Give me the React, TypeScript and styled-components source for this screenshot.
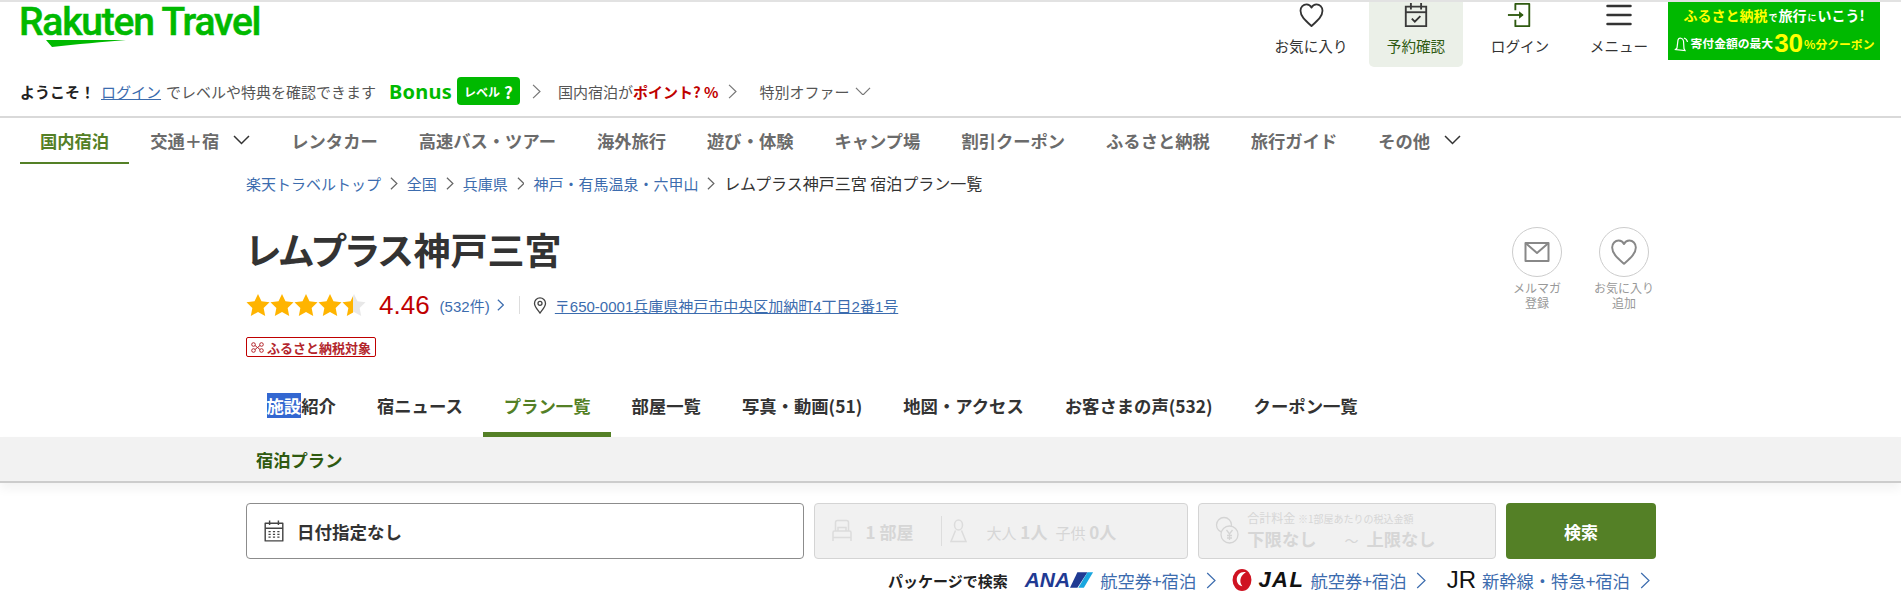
import React from 'react'
import styled, { createGlobalStyle } from 'styled-components'

const GlobalStyle = createGlobalStyle`
    html, body {
        margin: 0;
        padding: 0;
        background: #fff;
        color: #333;
        font-family: "Liberation Sans", "Noto Sans CJK JP", sans-serif;
        overflow: hidden;
    }
    * { box-sizing: border-box; }
    a { color: inherit; }
`

const GREEN = '#00b900'
const OLIVE = '#548026'
const LINK = '#3c6cae'

type ChevronProps = { size?: number; color?: string; stroke?: number }

const ChevronRight: React.FC<ChevronProps> = ({ size = 14, color = '#666', stroke = 1.2 }) => (
    <svg width={size * 0.6} height={size} viewBox="0 0 6 10" fill="none" style={{ flexShrink: 0 }}>
        <path d="M.7.6 5.3 5 .7 9.4" stroke={color} strokeWidth={stroke} vectorEffect="non-scaling-stroke" />
    </svg>
)

const ChevronDown: React.FC<ChevronProps> = ({ size = 17, color = '#333', stroke = 1.5 }) => (
    <svg width={size} height={size * 0.55} viewBox="0 0 18 10" fill="none" style={{ flexShrink: 0 }}>
        <path d="M1 1l8 8 8-8" stroke={color} strokeWidth={stroke} vectorEffect="non-scaling-stroke" />
    </svg>
)

const HeartIcon: React.FC<{ color?: string; size?: number }> = ({ color = '#333', size = 27 }) => (
    <svg width={size} height={size} viewBox="0 0 26 26" fill="none">
        <path
            d="M13 24C7 18.6 2 14.4 2 8.8 2 5 4.8 2.4 8 2.4c2.200 0 4 1.200 5 3.200 1-2 2.800-3.200 5-3.200 3.200 0 6 2.600 6 6.400C24 14.400 19 18.600 13 24z"
            stroke={color}
            strokeWidth="1.8"
            strokeLinejoin="round"
        />
    </svg>
)

const CalendarCheckIcon = () => (
    <svg width="26" height="28" viewBox="0 0 26 28" fill="none" stroke="#3a3a3a" strokeWidth="2">
        <path d="M2 5h22v21H2z" />
        <path d="M2 11h22" />
        <path d="M7.500 1v7M18.500 1v7" />
        <path d="M8.500 18l3.200 3.200 6-6" stroke="#333" />
    </svg>
)

const LoginIcon = () => (
    <svg width="28" height="28" viewBox="0 0 28 28" fill="none" stroke="#2f5a10" strokeWidth="2">
        <path d="M9 9V2h15v24H9v-7" strokeLinejoin="round" />
        <path d="M1 14h16" />
        <path d="M13 10l5 4-5 4z" fill="#2f5a10" stroke="none" />
    </svg>
)

const MenuIcon = () => (
    <svg width="26" height="24" viewBox="0 0 26 24" fill="none" stroke="#333" strokeWidth="2.500" strokeLinecap="round">
        <path d="M1.500 3h23M1.500 12h23M1.500 21h23" />
    </svg>
)

const BellIcon = () => (
    <svg width="15" height="17" viewBox="0 0 15 17" fill="none" stroke="#fff" strokeWidth="1.200">
        <path d="M3 13L1.500 14.500 11 15.500 10 13.500 9.500 6C9 3 5 2 4 5z" />
        <path d="M10 3q3 1 3.500 4" />
    </svg>
)

const STAR = 'M10 .8l2.900 6.100 6.700.9-4.900 4.600 1.300 6.700L10 15.800 4 19.100l1.300-6.700L.4 7.800l6.700-.9z'

const Star: React.FC<{ fill: number; id: string }> = ({ fill, id }) => (
    <svg width="24" height="24" viewBox="0 0 20 20">
        <defs>
            <linearGradient id={id}>
                <stop offset={`${fill}%`} stopColor="#ffb400" />
                <stop offset={`${fill}%`} stopColor="#e8e8e8" />
            </linearGradient>
        </defs>
        <path d={STAR} fill={`url(#${id})`} />
    </svg>
)

const PinIcon = () => (
    <svg width="14" height="17" viewBox="0 0 14 17" fill="none" stroke="#444" strokeWidth="1.300">
        <path d="M7 16C4 12 1.500 9.500 1.500 6.400a5.500 5.500 0 0 1 11 0C12.500 9.500 10 12 7 16z" />
        <circle cx="7" cy="6.300" r="2" />
    </svg>
)

const ScissorsIcon = () => (
    <svg width="13" height="11" viewBox="0 0 13 11" fill="none" stroke="#b3262c" strokeWidth="1">
        <circle cx="2.500" cy="2.500" r="1.800" />
        <circle cx="2.500" cy="8.500" r="1.800" />
        <circle cx="10.500" cy="2.500" r="1.800" />
        <circle cx="10.500" cy="8.500" r="1.800" />
        <path d="M4 3.500l5 4M9 3.500l-5 4" />
    </svg>
)

const MailIcon = () => (
    <svg width="26" height="22" viewBox="0 0 26 22" fill="none" stroke="#888" strokeWidth="2" strokeLinejoin="round">
        <path d="M1.500 2h23v18h-23z" />
        <path d="M1.500 2L13 12 24.500 2" />
    </svg>
)

const DateIcon = () => (
    <svg width="20" height="22" viewBox="0 0 18 20" fill="none" stroke="#444" strokeWidth="1.300">
        <path d="M1 3h16v16H1z" strokeLinejoin="round" />
        <path d="M1 7.500h16M5 .5v4M13 .5v4" />
        <path d="M4 10.500h2M8 10.500h2M12 10.500h2M4 13h2M8 13h2M12 13h2M4 15.500h2M8 15.500h2M12 15.500h2" strokeWidth="1.200" />
    </svg>
)

const BedIcon = () => (
    <svg width="20" height="24" viewBox="0 0 20 24" fill="none" stroke="#dcdcdc" strokeWidth="1.500">
        <path d="M3.500 12V3.500q0-2 2-2h9q2 0 2 2V12" />
        <path d="M6 12V8.500h8V12" />
        <path d="M1 22v-8.500q0-1.500 1.500-1.500h15q1.500 0 1.500 1.500V22M1 18.500h18" />
    </svg>
)

const PersonIcon = () => (
    <svg width="17" height="24" viewBox="0 0 17 24" fill="none" stroke="#dcdcdc" strokeWidth="1.500">
        <ellipse cx="8.500" cy="6" rx="4" ry="5" />
        <path d="M5.500 11.500L1 22.500h15l-4.500-11" />
    </svg>
)

const CoinsIcon = () => (
    <svg width="24" height="30" viewBox="0 0 24 30" fill="none" stroke="#d4d4d4" strokeWidth="1.300">
        <circle cx="9" cy="9" r="7.500" />
        <circle cx="14.500" cy="18.500" r="8.500" fill="#f1f1f1" />
        <path d="M11.500 14l3 4 3-4M14.500 18v6M12 19.500h5M12 22h5" />
    </svg>
)

const CraneLogo = () => (
    <svg width="20" height="24" viewBox="0 0 18 21">
        <ellipse cx="9" cy="10.500" rx="8.500" ry="10" fill="#cf1322" />
        <path d="M12.500 3.500C8 2.500 4 6 4.300 10.500c.2 3 2.200 5.300 5 5.700C7.500 14 7 11 8 8.500c.8-2.200 2.800-4 4.500-5z" fill="#fff" />
    </svg>
)

const NAV_ITEMS: { label: string; active?: boolean; menu?: boolean }[] = [
    { label: '国内宿泊', active: true },
    { label: '交通＋宿', menu: true },
    { label: 'レンタカー' },
    { label: '高速バス・ツアー' },
    { label: '海外旅行' },
    { label: '遊び・体験' },
    { label: 'キャンプ場' },
    { label: '割引クーポン' },
    { label: 'ふるさと納税' },
    { label: '旅行ガイド' },
    { label: 'その他', menu: true },
]

const TAB_ITEMS = ['宿ニュース', 'プラン一覧', '部屋一覧', '写真・動画(51)', '地図・アクセス', 'お客さまの声(532)', 'クーポン一覧']

const CRUMBS = ['楽天トラベルトップ', '全国', '兵庫県', '神戸・有馬温泉・六甲山']

export default function App() {
    return (
        <>
            <GlobalStyle />
            <Page>
                <TopBar>
                    <Logo>
                        <LogoText>Rakuten Travel</LogoText>
                        <Swoosh width="80" height="7" viewBox="0 0 80 7">
                            <path d="M0 0h80C58 2 30 4 6 7z" fill={GREEN} />
                        </Swoosh>
                    </Logo>
                    <TopNav>
                        <TopItem>
                            <HeartIcon />
                            <TopLabel>お気に入り</TopLabel>
                        </TopItem>
                        <TopItem $active $gap={11}>
                            <CalendarCheckIcon />
                            <TopLabel>予約確認</TopLabel>
                        </TopItem>
                        <TopItem $gap={10}>
                            <LoginIcon />
                            <TopLabel>ログイン</TopLabel>
                        </TopItem>
                        <TopItem $gap={5}>
                            <MenuIcon />
                            <TopLabel>メニュー</TopLabel>
                        </TopItem>
                        <Banner>
                            <BannerTop>
                                <b>ふるさと納税</b>
                                <small>で</small>
                                旅行
                                <small>に</small>
                                いこう!
                            </BannerTop>
                            <BannerBottom>
                                <BellIcon />
                                寄付金額の最大<strong>30</strong>
                                <b>%分クーポン</b>
                            </BannerBottom>
                        </Banner>
                    </TopNav>
                </TopBar>

                <InfoBar>
                    <Welcome>ようこそ！</Welcome>
                    <InfoLink href="#">ログイン</InfoLink>
                    <InfoText>でレベルや特典を確認できます</InfoText>
                    <BonusWord>Bonus</BonusWord>
                    <LevelBadge>
                        レベル <span>?</span>
                    </LevelBadge>
                    <ChevronRight size={15} color="#777" />
                    <InfoText $gap={17}>
                        国内宿泊が<Red>ポイント? %</Red>
                    </InfoText>
                    <ChevronRight size={15} color="#777" />
                    <InfoText $gap={22} $end={6}>
                        特別オファー
                    </InfoText>
                    <ChevronDown size={16} color="#777" stroke={1.2} />
                </InfoBar>

                <GlobalNav>
                    {NAV_ITEMS.map((item) => (
                        <NavItem key={item.label} $active={item.active}>
                            {item.label}
                            {item.menu && <ChevronDown />}
                        </NavItem>
                    ))}
                </GlobalNav>

                <Content>
                    <Crumbs>
                        {CRUMBS.map((c) => (
                            <React.Fragment key={c}>
                                <CrumbLink>{c}</CrumbLink>
                                <ChevronRight size={13} color="#666" />
                            </React.Fragment>
                        ))}
                        <CrumbCurrent>レムプラス神戸三宮 宿泊プラン一覧</CrumbCurrent>
                    </Crumbs>

                    <HotelHead>
                        <div>
                            <HotelName>レムプラス神戸三宮</HotelName>
                            <RatingRow>
                                <Stars>
                                    {[100, 100, 100, 100, 46].map((f, i) => (
                                        <Star key={i} fill={f} id={`star-${i}`} />
                                    ))}
                                </Stars>
                                <Score>4.46</Score>
                                <Reviews>(532件)</Reviews>
                                <ChevronRight size={12} color={LINK} />
                                <Sep />
                                <PinIcon />
                                <Address href="#">〒650-0001兵庫県神戸市中央区加納町4丁目2番1号</Address>
                            </RatingRow>
                            <FurusatoBadge>
                                <ScissorsIcon />
                                ふるさと納税対象
                            </FurusatoBadge>
                        </div>
                        <CircleActions>
                            <CircleAction>
                                <Circle>
                                    <MailIcon />
                                </Circle>
                                <CircleLabel>
                                    メルマガ
                                    <br />
                                    登録
                                </CircleLabel>
                            </CircleAction>
                            <CircleAction>
                                <Circle>
                                    <HeartIcon color="#888" size={28} />
                                </Circle>
                                <CircleLabel>
                                    お気に入り
                                    <br />
                                    追加
                                </CircleLabel>
                            </CircleAction>
                        </CircleActions>
                    </HotelHead>

                    <Tabs>
                        <Tab>
                            <Selected>施設</Selected>紹介
                        </Tab>
                        {TAB_ITEMS.map((t) => (
                            <Tab key={t} $active={t === 'プラン一覧'}>
                                {t}
                            </Tab>
                        ))}
                    </Tabs>
                </Content>

                <PlanBand>
                    <PlanTitle>宿泊プラン</PlanTitle>
                </PlanBand>

                <Content>
                    <SearchRow>
                        <DateBox>
                            <DateIcon />
                            日付指定なし
                        </DateBox>
                        <GuestBox>
                            <BedIcon />
                            <GuestStrong $left={14}>1 部屋</GuestStrong>
                            <VSep />
                            <PersonIcon />
                            <GuestStrong $left={19}>
                                <small>大人</small> 1人
                            </GuestStrong>
                            <GuestStrong $left={8}>
                                <small>子供</small> 0人
                            </GuestStrong>
                        </GuestBox>
                        <PriceBox>
                            <CoinsIcon />
                            <PriceInner>
                                <PriceCaption>
                                    合計料金 <small>※1部屋あたりの税込金額</small>
                                </PriceCaption>
                                <PriceRange>
                                    下限なし<Tilde>～</Tilde>上限なし
                                </PriceRange>
                            </PriceInner>
                        </PriceBox>
                        <SearchButton>検索</SearchButton>
                    </SearchRow>

                    <PackageRow>
                        <PackageTitle>パッケージで検索</PackageTitle>
                        <PackageLink>
                            <AnaMark>
                                ANA
                                <svg width="24" height="18" viewBox="0 0 26 17">
                                    <path d="M8 0h11L8 17H0z" fill="#1f3a93" />
                                    <path d="M19 0h6L15 17h-6z" fill="#19a6df" />
                                </svg>
                            </AnaMark>
                            航空券+宿泊
                            <ChevronRight size={17} color={LINK} />
                        </PackageLink>
                        <PackageLink $pull={4}>
                            <CraneLogo />
                            <JalMark>JAL</JalMark>
                            航空券+宿泊
                            <ChevronRight size={17} color={LINK} />
                        </PackageLink>
                        <PackageLink>
                            <JrMark>JR</JrMark>
                            新幹線・特急+宿泊
                            <ChevronRight size={17} color={LINK} />
                        </PackageLink>
                    </PackageRow>
                </Content>
            </Page>
        </>
    )
}

const Page = styled.div`
    width: 1901px;
    border-top: 2px solid #e2e2e2;
`

const TopBar = styled.header`
    display: flex;
    justify-content: space-between;
    height: 66px;
    padding: 0 21px 0 19px;
`

const Logo = styled.div`
    display: flex;
    flex-direction: column;
    height: 46px;
    position: relative;
`

const LogoText = styled.div`
    font-family: Roboto, sans-serif;
    font-weight: 500;
    font-size: 39px;
    line-height: 40px;
    color: ${GREEN};
    letter-spacing: -1.2px;
    margin-top: 0;
    white-space: nowrap;
    -webkit-text-stroke: .5px ${GREEN};
`

const Swoosh = styled.svg`
    position: absolute;
    left: 27px;
    top: 38px;
`

const TopNav = styled.nav`
    display: flex;
    align-items: flex-start;
`

const TopItem = styled.a<{ $active?: boolean; $gap?: number }>`
    width: 94px;
    height: 65px;
    margin-left: ${({ $gap }) => $gap ?? 0}px;
    display: flex;
    flex-direction: column;
    align-items: center;
    justify-content: space-between;
    padding-bottom: 12px;
    border-radius: 0 0 5px 5px;
    background: ${({ $active }) => ($active ? '#ebf0e8' : 'transparent')};
    color: ${({ $active }) => ($active ? '#2f5a10' : '#333')};
    svg { height: 26px; }
`

const TopLabel = styled.span`
    font-size: 14.6px;
    line-height: 18px;
    white-space: nowrap;
    font-family: "Noto Sans CJK JP", sans-serif;
`

const Banner = styled.div`
    width: 212px;
    height: 58px;
    margin-left: 2px;
    background: ${GREEN};
    font-family: "Noto Sans CJK JP", sans-serif;
    font-weight: 700;
    color: #fff;
    text-align: center;
    overflow: hidden;
    b { color: #ff0; font-weight: 700; }
`

const BannerTop = styled.div`
    font-size: 14px;
    line-height: 18px;
    margin-top: 4px;
    white-space: nowrap;
    small { font-size: 9px; margin: 0 1px; }
`

const BannerBottom = styled.div`
    display: flex;
    align-items: center;
    justify-content: center;
    font-size: 11.8px;
    line-height: 30px;
    white-space: nowrap;
    strong {
        font-family: "Liberation Sans", sans-serif;
        font-size: 26px;
        color: #ff0;
        margin: 0 1px;
    }
    b { margin-top: 2px; }
    svg { margin-right: 2px; }
`

const InfoBar = styled.div`
    display: flex;
    align-items: center;
    height: 50px;
    padding-left: 20px;
    padding-bottom: 2px;
    border-bottom: 2px solid #d9d9d9;
    font-size: 15px;
    font-family: "Noto Sans CJK JP", sans-serif;
`

const Welcome = styled.b`
    font-weight: 700;
    color: #222;
`

const InfoLink = styled.a`
    color: ${LINK};
    text-decoration: underline;
    margin: 0 5px 0 6px;
`

const InfoText = styled.span<{ $gap?: number; $end?: number }>`
    color: #555;
    margin-left: ${({ $gap }) => $gap ?? 0}px;
    margin-right: ${({ $end }) => $end ?? 10}px;
`

const Red = styled.b`
    color: #bf0000;
    font-weight: 700;
`

const BonusWord = styled.span`
    font-family: "Noto Sans", sans-serif;
    font-weight: 700;
    font-size: 20px;
    color: ${GREEN};
    margin-left: 3px;
    letter-spacing: .2px;
`

const LevelBadge = styled.span`
    display: inline-flex;
    align-items: center;
    justify-content: center;
    gap: 4px;
    width: 63px;
    height: 28px;
    margin: 0 12px 0 5px;
    border-radius: 4px;
    background: ${GREEN};
    color: #fff;
    font-size: 12px;
    font-weight: 700;
    span { font-size: 17px; }
`

const GlobalNav = styled.nav`
    display: flex;
    align-items: stretch;
    height: 46px;
    padding-left: 20px;
    font-family: "Noto Sans CJK JP", sans-serif;
`

const NavItem = styled.a<{ $active?: boolean }>`
    display: flex;
    align-items: center;
    gap: 14px;
    padding: 0 20px;
    margin-right: 1px;
    font-size: 17.3px;
    font-weight: 700;
    white-space: nowrap;
    color: ${({ $active }) => ($active ? OLIVE : '#6b6b6b')};
    border-bottom: 2px solid ${({ $active }) => ($active ? OLIVE : 'transparent')};
`

const Content = styled.div`
    width: 1410px;
    margin-left: 246px;
`

const Crumbs = styled.div`
    display: flex;
    align-items: center;
    gap: 9px;
    height: 43px;
    padding-bottom: 5px;
    font-size: 15px;
    font-family: "Noto Sans CJK JP", sans-serif;
    color: #333;
`

const CrumbLink = styled.a`
    color: ${LINK};
`

const CrumbCurrent = styled.span`
    font-size: 16px;
`

const HotelHead = styled.div`
    display: flex;
    justify-content: space-between;
    height: 177px;
    padding-top: 20px;
`

const HotelName = styled.h1`
    margin: 0;
    font-family: "Noto Sans CJK JP", sans-serif;
    font-size: 37px;
    line-height: 44px;
    font-weight: 700;
    font-feature-settings: "palt";
    color: #333;
`

const RatingRow = styled.div`
    display: flex;
    align-items: center;
    height: 34px;
    margin-top: 17px;
`

const Stars = styled.div`
    display: flex;
    gap: 0;
`

const Score = styled.span`
    margin-left: 13px;
    font-size: 26px;
    color: #bf0000;
`

const Reviews = styled.span`
    margin: 0 7px 0 10px;
    font-size: 15px;
    color: ${LINK};
`

const Sep = styled.span`
    width: 1px;
    height: 18px;
    margin: 0 13px 0 15px;
    background: #ddd;
`

const Address = styled.a`
    margin-left: 8px;
    color: ${LINK};
    font-size: 15px;
    text-decoration: underline;
`

const FurusatoBadge = styled.span`
    display: inline-flex;
    align-items: center;
    gap: 3px;
    height: 20px;
    margin-top: 15px;
    padding: 0 4px;
    border: 1px solid #bf0000;
    border-radius: 2px;
    color: #b3262c;
    font-size: 13px;
    font-weight: 700;
    font-family: "Noto Sans CJK JP", sans-serif;
`

const CircleActions = styled.div`
    display: flex;
    gap: 37px;
    padding-right: 7px;
`

const CircleAction = styled.div`
    width: 50px;
    display: flex;
    flex-direction: column;
    align-items: center;
`

const Circle = styled.div`
    width: 50px;
    height: 50px;
    border: 1px solid #ccc;
    border-radius: 50%;
    display: flex;
    align-items: center;
    justify-content: center;
`

const CircleLabel = styled.div`
    margin-top: 3px;
    font-size: 12px;
    line-height: 15px;
    text-align: center;
    white-space: nowrap;
    color: #999;
    font-family: "Noto Sans CJK JP", sans-serif;
`

const Tabs = styled.div`
    display: flex;
    height: 53px;
    font-family: "Noto Sans CJK JP", sans-serif;
`

const Tab = styled.a<{ $active?: boolean }>`
    display: flex;
    align-items: center;
    padding: 0 20.5px 5px;
    font-size: 17.35px;
    font-weight: 700;
    white-space: nowrap;
    color: ${({ $active }) => ($active ? OLIVE : '#333')};
    border-bottom: 5px solid ${({ $active }) => ($active ? OLIVE : 'transparent')};
`

const Selected = styled.span`
    background: #3367d1;
    color: #fff;
`

const PlanBand = styled.div`
    height: 46px;
    padding-left: 256px;
    display: flex;
    align-items: center;
    background: #f2f2f2;
    border-bottom: 2px solid #ccc;
    box-shadow: 0 6px 10px rgba(0, 0, 0, .05);
`

const PlanTitle = styled.div`
    font-size: 17.3px;
    font-weight: 700;
    color: #2f5a10;
    font-family: "Noto Sans CJK JP", sans-serif;
`

const SearchRow = styled.div`
    display: flex;
    gap: 10px;
    height: 56px;
    margin-top: 20px;
    font-family: "Noto Sans CJK JP", sans-serif;
`

const DateBox = styled.div`
    width: 558px;
    display: flex;
    align-items: center;
    gap: 13px;
    padding-left: 17px;
    border: 1px solid #8c8c8c;
    border-radius: 4px;
    font-size: 17.5px;
    font-weight: 700;
    color: #333;
`

const DisabledBox = styled.div`
    display: flex;
    align-items: center;
    background: #f1f1f1;
    border: 1px solid #d4d4d4;
    border-radius: 4px;
    color: #d6d6d6;
`

const GuestBox = styled(DisabledBox)`
    width: 375px;
    padding-left: 17px;
`

const GuestStrong = styled.span<{ $left: number }>`
    margin-left: ${({ $left }) => $left}px;
    font-size: 17px;
    font-weight: 700;
    small { font-size: 15px; font-weight: 400; }
`

const VSep = styled.span`
    width: 1px;
    height: 30px;
    margin: 0 8px 0 28px;
    background: #ddd;
`

const PriceBox = styled(DisabledBox)`
    width: 298px;
    padding-left: 16px;
`

const PriceInner = styled.div`
    margin-left: 8px;
`

const PriceCaption = styled.div`
    font-size: 12px;
    line-height: 14px;
    small { font-size: 10px; }
`

const PriceRange = styled.div`
    margin-top: 2px;
    font-size: 17.3px;
    line-height: 22px;
    font-weight: 700;
`

const Tilde = styled.span`
    margin: 0 8px 0 28px;
    font-weight: 400;
    font-size: 14px;
`

const SearchButton = styled.button`
    width: 150px;
    border: 0;
    border-radius: 4px;
    background: ${OLIVE};
    color: #fff;
    font-family: inherit;
    font-size: 17px;
    font-weight: 700;
`

const PackageRow = styled.div`
    display: flex;
    align-items: center;
    justify-content: flex-end;
    gap: 20px;
    height: 24px;
    margin-top: 9px;
    padding-right: 6px;
    font-family: "Noto Sans CJK JP", sans-serif;
`

const PackageTitle = styled.div`
    font-size: 15px;
    font-weight: 700;
    color: #222;
    margin-right: -3px;
`

const PackageLink = styled.a<{ $pull?: number }>`
    display: flex;
    align-items: center;
    gap: 6px;
    margin-left: ${({ $pull }) => -($pull ?? 0)}px;
    font-size: 17.3px;
    color: ${LINK};
    & > svg:last-child { margin-left: 4px; }
`

const AnaMark = styled.span`
    display: inline-flex;
    align-items: center;
    font-family: "Liberation Sans", sans-serif;
    font-style: italic;
    font-weight: 700;
    font-size: 21px;
    color: #1f3a93;
`

const JalMark = styled.span`
    font-family: "Liberation Sans", sans-serif;
    font-style: italic;
    font-weight: 700;
    font-size: 22px;
    letter-spacing: 1.5px;
    color: #111;
`

const JrMark = styled.span`
    font-family: "Liberation Sans", sans-serif;
    font-size: 24px;
    color: #111;
`
